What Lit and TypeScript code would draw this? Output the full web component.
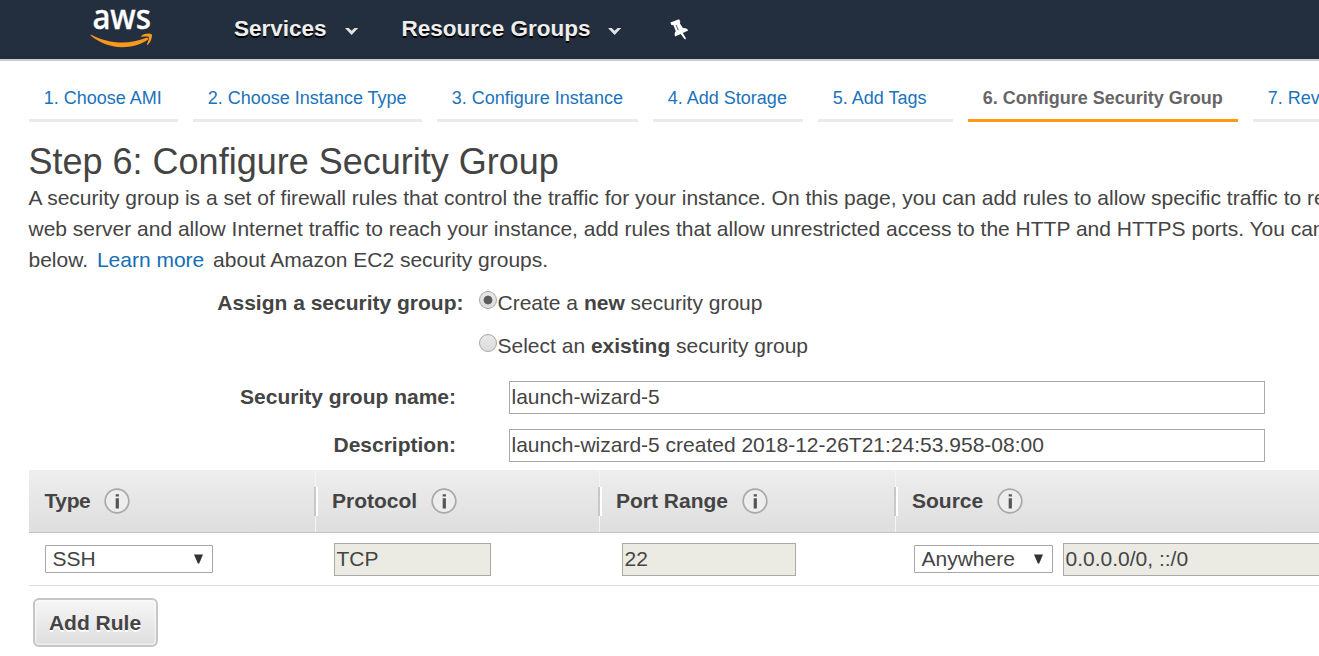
import { LitElement, html, css } from "lit";
import { customElement } from "lit/decorators.js";
import { classMap } from "lit/directives/class-map.js";
import { styleMap } from "lit/directives/style-map.js";

const STEPS = [
  { label: "1. Choose AMI", width: 149 },
  { label: "2. Choose Instance Type", width: 229 },
  { label: "3. Configure Instance", width: 201 },
  { label: "4. Add Storage", width: 150 },
  { label: "5. Add Tags", width: 135 },
  { label: "6. Configure Security Group", width: 270 },
  { label: "7. Review", width: 110 },
];
const ACTIVE_STEP = 5;
const COLUMNS = ["Type", "Protocol", "Port Range", "Source"];

const chevron = html`<svg class="chevron" width="14" height="9" viewBox="0 0 14 9">
  <path d="M0 1 H3.7 L6.6 3.8 L9.5 1 H13.2 L6.6 8 Z" fill="#e4e2e0" />
</svg>`;

const arrow = html`<svg class="arrow" width="9" height="10" viewBox="0 0 9 10">
  <path d="M0 0.5 H9 L5.2 9.5 H3.8 Z" fill="#333" />
</svg>`;

const info = html`<svg class="info" width="26" height="26" viewBox="0 0 26 26">
  <circle cx="13" cy="13" r="11.8" fill="#ededed" stroke="#a9a9a9" stroke-width="1.7" />
  <path d="M11.7 6.2 H14.9 V8.6 H11.7 Z M11.7 10.3 H14.9 V20.6 H11.7 Z" fill="#555" />
</svg>`;

@customElement("app-root")
export class AppRoot extends LitElement {
  static styles = css`
    :host {
      display: block;
      height: 656px;
      overflow: hidden;
      background: #fff;
      color: #444;
      font: 21px/31px "Liberation Sans", Arial, sans-serif;
      white-space: nowrap;
    }
    * { box-sizing: border-box; }
    .top {
      display: flex;
      height: 61px;
      background: #232f3e;
      border-bottom: 2px solid #c9ccd1;
      color: #eee;
      font-size: 22.5px;
      font-weight: bold;
      line-height: 58px;
      text-shadow: 0 1.5px 0 #000;
    }
    .logo { margin-left: 90px; width: 144px; height: 56px; overflow: visible; }
    .wordmark { text-shadow: none; }
    .item { display: flex; align-items: flex-start; }
    .item + .item { margin-left: 43px; }
    .chevron { margin: 27px 0 0 18px; }
    .pin { margin: 18px 0 0 48px; }
    .steps {
      display: flex;
      gap: 15px;
      margin: 16px 0 0 29px;
      font-size: 18px;
      line-height: 42px;
    }
    .step {
      flex: none;
      padding: 0 0 0 14.8px;
      border-bottom: 3px solid #eaeaea;
      color: #1a73bb;
    }
    .step.active {
      color: #666;
      font-weight: bold;
      border-color: #ff9914;
    }
    h1 {
      margin: 20px 0 0 28.5px;
      font-size: 36px;
      font-weight: normal;
      line-height: 40px;
    }
    .intro { margin: 0 0 0 28.5px; }
    .link { color: #146eb4; padding: 0 3px; }
    .form { padding: 12px 0 1px; }
    .row { display: grid; grid-template-columns: 463.5px auto; height: 43px; }
    .row.field {
      grid-template-columns: 456px 756px;
      column-gap: 53px;
      height: 48px;
      padding-top: 8px;
    }
    .lbl { text-align: right; font-weight: bold; }
    .choice { display: flex; margin-left: 15.5px; }
    .radio {
      flex: none;
      width: 18px;
      height: 18px;
      margin: 4px 0.5px 0 0;
      border: 1px solid #a6a6a6;
      border-radius: 50%;
      background: linear-gradient(#e9e9e9, #dcdcdc);
    }
    .radio.on {
      background: radial-gradient(circle, #5c5c5c 4px, transparent 4.8px),
        linear-gradient(#e9e9e9, #dcdcdc);
    }
    .box {
      height: 33px;
      padding: 0 1.5px;
      border: 1px solid #a9a9a9;
      background: #fff;
      line-height: 29px;
    }
    .box.off { background: #ebebe4; }
    .head, .rule {
      display: grid;
      grid-template-columns: 287px 284px 296px 600px;
      margin-left: 29px;
    }
    .head {
      height: 63px;
      border-bottom: 1px solid #c4c4c4;
      background: linear-gradient(#eee, #dedede);
      font-weight: bold;
    }
    .th {
      position: relative;
      display: flex;
      align-items: center;
      padding-left: 16px;
      gap: 13.5px;
      border-right: 1px solid #f4f4f4;
    }
    .name { padding-bottom: 2px; }
    .th:first-child .name { letter-spacing: -0.4px; margin: 0 0.5px 0 -0.5px; }
    .th:not(:last-child)::after {
      content: "";
      position: absolute;
      right: -3px;
      top: 17px;
      width: 4px;
      height: 29px;
      background: linear-gradient(90deg, #c8c8c8 50%, #fff 50%);
    }
    .rule { height: 53px; border-bottom: 1px solid #ddd; }
    .td { display: flex; align-items: center; }
    .select {
      display: flex;
      justify-content: space-between;
      align-items: center;
      height: 28px;
      padding: 0 9px 0 6.5px;
      border: 1px solid #a6a6a6;
      border-radius: 1px;
      line-height: 26px;
    }
    .type { width: 168px; margin-left: 16px; }
    .proto { width: 157px; margin-left: 18px; }
    .port { width: 174px; margin-left: 22px; }
    .src { width: 139px; margin-left: 18px; }
    .cidr { width: 400px; margin-left: 10px; }
    .add {
      display: block;
      width: 125px;
      height: 49px;
      margin: 12px 0 0 33px;
      padding: 0 1px 0 0;
      border: 2px solid #c6c6c6;
      border-radius: 6px;
      background: linear-gradient(#f6f6f6, #dedede);
      box-shadow: inset 0 0 0 1.5px rgba(255, 255, 255, 0.5);
      color: #444;
      font: bold 21px/45px "Liberation Sans", Arial, sans-serif;
      text-shadow: 0 1.5px 0 #fff;
    }
  `;

  render() {
    return html`
      <header class="top">
        <svg class="logo" viewBox="0 0 144 56">
          <text class="wordmark" x="2.4" y="29.4" font-family="Noto Sans" font-weight="500" font-size="34"
            fill="#fff" stroke="#fff" stroke-width="0.4" textLength="58.6" lengthAdjust="spacingAndGlyphs">aws</text>
          <path d="M1.2 34.8 C19 44.3 39 44.8 56.3 37.8 C58.3 37.1 59 38.9 57.4 40 C50 45 41 47.2 32 47.2 C20 47.2 9 42.5 1 35.8 C0.6 35.2 0.7 34.6 1.2 34.8 Z" fill="#f8991d" />
          <path d="M51.5 35.8 C54 33.4 60 32.8 61.6 34.2 C62.9 36 60.8 42.2 57.6 45 C57 45.2 56.7 44.8 57 44.2 C58.2 41.5 59.3 38 58.7 37 C58 36.2 54.8 36.5 51.9 36.8 C51.2 36.8 51.1 36.2 51.5 35.8 Z" fill="#f8991d" />
        </svg>
        <div class="item">Services${chevron}</div>
        <div class="item">Resource Groups${chevron}</div>
        <svg class="pin" width="20" height="23" viewBox="0 0 20 23">
          <path d="M0.4 4.6 L9 1.3 L10.4 3.6 L9.7 5 L13 10.2 C15.5 9.8 17.5 10.8 18.2 12.6 L12.8 15.1 L15.8 20 L15.6 21.6 L14.2 20.8 L10.7 16 L5 18.6 C4.3 16.5 4.6 14.5 5.8 13.2 L3.5 7.2 L1.4 7 Z" fill="#fff" />
          <path d="M6 7 L8.4 12.2" stroke="#232f3e" stroke-width="0.8" />
        </svg>
      </header>
      <nav class="steps">
        ${STEPS.map(
          (s, i) => html`<div
            class=${classMap({ step: true, active: i === ACTIVE_STEP })}
            style=${styleMap({ width: `${s.width}px` })}
          >${s.label}</div>`
        )}
      </nav>
      <h1>Step 6: Configure Security Group</h1>
      <p class="intro">
        A security group is a set of firewall rules that control the traffic for your instance. On this page, you can add rules to allow specific traffic to reach<br />
        web server and allow Internet traffic to reach your instance, add rules that allow unrestricted access to the HTTP and HTTPS ports. You can<br />
        below. <span class="link">Learn more</span> about Amazon EC2 security groups.
      </p>
      <section class="form">
        <div class="row">
          <div class="lbl">Assign a security group:</div>
          <div class="choice"><span class="radio on"></span><span>Create a <b>new</b> security group</span></div>
        </div>
        <div class="row">
          <div></div>
          <div class="choice"><span class="radio"></span><span>Select an <b>existing</b> security group</span></div>
        </div>
        <div class="row field">
          <div class="lbl">Security group name:</div>
          <div class="box">launch-wizard-5</div>
        </div>
        <div class="row field">
          <div class="lbl">Description:</div>
          <div class="box">launch-wizard-5 created 2018-12-26T21:24:53.958-08:00</div>
        </div>
      </section>
      <div class="head">
        ${COLUMNS.map((c) => html`<div class="th"><span class="name">${c}</span>${info}</div>`)}
      </div>
      <div class="rule">
        <div class="td"><div class="select type">SSH${arrow}</div></div>
        <div class="td"><div class="box off proto">TCP</div></div>
        <div class="td"><div class="box off port">22</div></div>
        <div class="td">
          <div class="select src">Anywhere${arrow}</div>
          <div class="box off cidr">0.0.0.0/0, ::/0</div>
        </div>
      </div>
      <button class="add">Add Rule</button>
    `;
  }
}
